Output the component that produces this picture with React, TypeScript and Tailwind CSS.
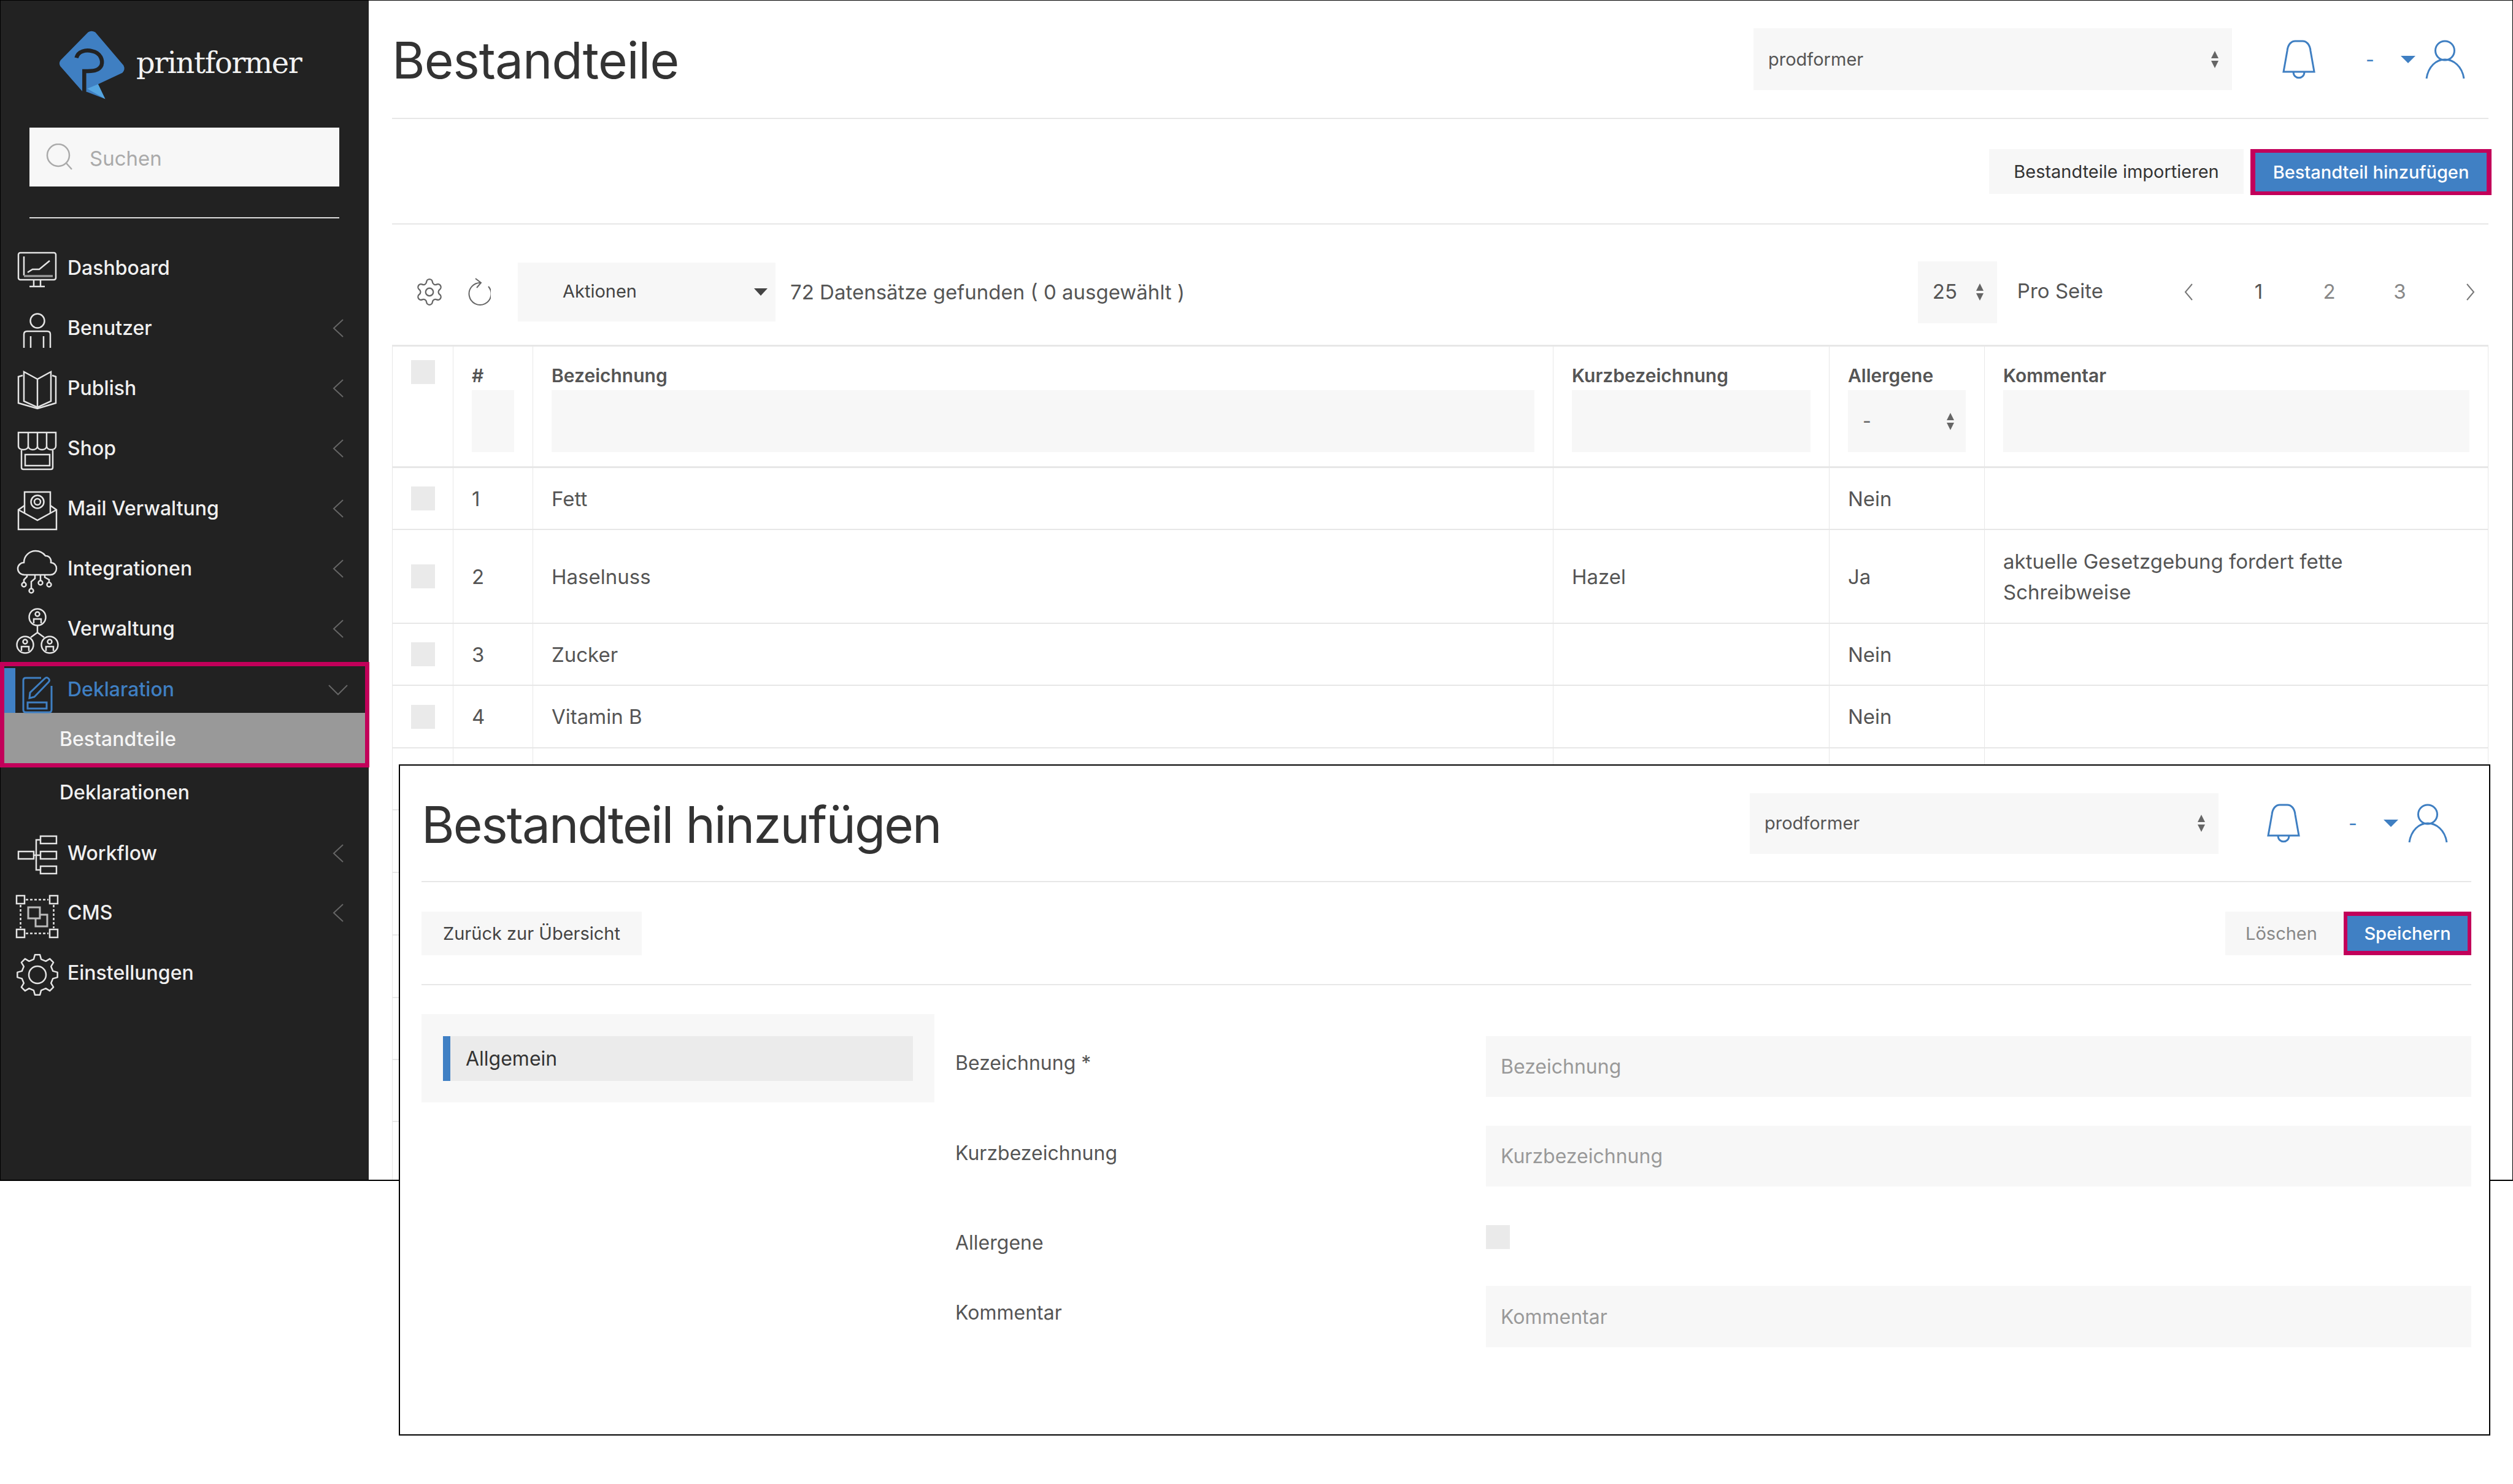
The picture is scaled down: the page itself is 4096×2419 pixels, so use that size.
import { ReactNode } from "react";
import { Settings } from "lucide-react";

const BORDER = "border-[#e7e7e7]";

function gearPath(cx: number, cy: number, outer: number, inner: number, teeth: number) {
  const points: string[] = [];
  const step = (Math.PI * 2) / teeth;
  for (let i = 0; i < teeth; i++) {
    const a = i * step - Math.PI / 2;
    const list: [number, number][] = [
      [inner, a - step * 0.3],
      [outer, a - step * 0.16],
      [outer, a + step * 0.16],
      [inner, a + step * 0.3],
    ];
    list.forEach(([r, t]) => {
      points.push(`${(cx + r * Math.cos(t)).toFixed(1)} ${(cy + r * Math.sin(t)).toFixed(1)}`);
    });
  }
  return `M${points.join(" L")} Z`;
}

function NavIcon({ children, blue }: { children: ReactNode; blue?: boolean }) {
  return (
    <svg
      viewBox="0 0 68 68"
      fill="none"
      stroke={blue ? "#3f7fc2" : "#e4e4e4"}
      strokeWidth={blue ? 3 : 2.5}
      className="h-[68px] w-[68px] shrink-0 overflow-visible"
    >
      {children}
    </svg>
  );
}

const icons: Record<string, ReactNode> = {
  Dashboard: (
    <>
      <rect x="4" y="9" width="61" height="44" rx="3" />
      <path d="M13 15V46" />
      <path d="M13 47H60" strokeWidth="3.5" stroke="#999" />
      <path d="M19 41L27 36H38L55 22" />
      <path d="M29 53V63M40 53V63M22 64H47" />
    </>
  ),
  Benutzer: (
    <>
      <circle cx="35" cy="22" r="11.5" />
      <path d="M13 66V44Q13 39 18 39H51Q56 39 56 44V66" />
      <path d="M24 47V66M45 47V66" />
    </>
  ),
  Publish: (
    <>
      <path d="M35 19V65M35 19L13 7V55L35 65L57 55V7L35 19Z" />
      <path d="M11 13L4 15V58L35 67L65 58V15L59 13" />
    </>
  ),
  Shop: (
    <>
      <path d="M4 8H65V30C65 38 50 38 50 30C50 38 35 38 35 30C35 38 20 38 20 30C20 38 4 38 4 30Z" />
      <path d="M20 8V30M35 8V30M50 8V30" />
      <path d="M9 37V65Q9 68 12 68H57Q60 68 60 65V37" />
      <rect x="15" y="44" width="40" height="18" />
    </>
  ),
  "Mail Verwaltung": (
    <>
      <path d="M14 29L4 36V68H66V36L56 29" />
      <path d="M14 42V7H56V42" />
      <path d="M4 36L35 53L66 36" />
      <circle cx="35" cy="23" r="10.5" />
      <circle cx="35" cy="23" r="5" />
    </>
  ),
  Integrationen: (
    <>
      <path d="M14 44C7 44 3 39 3 34C3 28 8 24 13 24C13 13 22 5 32 5C40 5 45 9 48 13C55 13 58 19 57 24C63 25 66 29 66 34C66 39 62 44 56 44Z" />
      <path d="M13 57V52L18 47V44M25 66V55L31 50V44M40 53V44M54 57V52L47 48V44" />
      <circle cx="13" cy="60" r="3.5" />
      <circle cx="25" cy="70" r="3.5" />
      <circle cx="40" cy="57" r="3.5" />
      <circle cx="54" cy="60" r="3.5" />
    </>
  ),
  Verwaltung: (
    <>
      <circle cx="35" cy="15" r="13.5" />
      <circle cx="15" cy="60" r="13.5" />
      <circle cx="55" cy="60" r="13.5" />
      <circle cx="35" cy="10" r="3.5" />
      <circle cx="15" cy="55" r="3.5" />
      <circle cx="55" cy="55" r="3.5" />
      <path d="M29 25V18H41V25M9 70V63H21V70M49 70V63H61V70" />
      <path d="M35 29V40M24 48L35 40L46 48" />
    </>
  ),
  Deklaration: (
    <>
      <path d="M41 14H16Q12 14 12 18V66Q12 70 16 70H54Q58 70 58 66V27" />
      <path d="M22 47L23 38L47 15Q50 12 53 15Q56 18 53 21L30 45Z" />
      <rect x="19" y="54" width="31" height="10" />
    </>
  ),
  Workflow: (
    <>
      <rect x="4" y="31" width="25" height="12" />
      <rect x="40" y="6" width="26" height="12" />
      <rect x="40" y="31" width="26" height="12" />
      <rect x="40" y="55" width="26" height="12" />
      <path d="M29 37H40M40 12H33V61H40" />
    </>
  ),
  CMS: (
    <>
      <rect x="1" y="6" width="13" height="13" />
      <rect x="55" y="6" width="13" height="13" />
      <rect x="1" y="61" width="13" height="13" />
      <rect x="55" y="61" width="13" height="13" />
      <path d="M16 12.5H53M16 67.5H53M7.5 21V59M61.5 21V59" strokeDasharray="4 3" />
      <rect x="20" y="25" width="19" height="18" stroke="#bbb" strokeWidth="3" />
      <path d="M39 37H51V56H32V43" stroke="#bbb" strokeWidth="3" />
    </>
  ),
  Einstellungen: (
    <>
      <path d={gearPath(35, 37, 33, 26, 8)} strokeLinejoin="round" />
      <circle cx="35" cy="37" r="14" />
    </>
  ),
};

function ChevronLeft() {
  return (
    <svg viewBox="0 0 18 30" fill="none" stroke="#666" strokeWidth="2" className="ml-auto mr-[41px] h-[30px] w-[18px]">
      <path d="M17 1L2 15L17 29" />
    </svg>
  );
}

function NavRow({ label, arrow = true, className }: { label: string; arrow?: boolean; className: string }) {
  return (
    <div className={`flex items-center pl-[25px] ${className}`}>
      <NavIcon>{icons[label]}</NavIcon>
      <span className="ml-[16px] text-[32px] font-medium text-[#f0f0f0]">{label}</span>
      {arrow && <ChevronLeft />}
    </div>
  );
}

function UpDown() {
  return (
    <svg viewBox="0 0 14 28" className="h-[28px] w-[14px] shrink-0" fill="#666">
      <path d="M7 0L13 12H1Z" />
      <path d="M1 16H13L7 28Z" />
    </svg>
  );
}

function Bell() {
  return (
    <svg viewBox="0 0 54 64" fill="none" stroke="#3f7fc2" strokeWidth="3" className="h-[64px] w-[54px] shrink-0">
      <path d="M2 52H52L46 18C45 7 39 2 33 2H21C15 2 9 7 8 18Z" />
      <path d="M18 52C18 65 36 65 36 52" />
    </svg>
  );
}

function User() {
  return (
    <svg viewBox="0 0 65 64" fill="none" stroke="#3f7fc2" strokeWidth="3" className="h-[64px] w-[65px] shrink-0">
      <circle cx="32" cy="17.5" r="15.5" />
      <path d="M2 63C5 43 18 32 32 32C46 32 60 43 63 63" />
    </svg>
  );
}

function Header({
  title,
  height,
  select,
  gap,
  tracking,
}: {
  title: string;
  height: string;
  select: string;
  gap: string;
  tracking: string;
}) {
  return (
    <div className={`flex items-center border-b-2 ${BORDER} ${height}`}>
      <h1 className={`pt-[5px] text-[82px] leading-none font-normal text-[#333] ${tracking}`}>{title}</h1>
      <div className="ml-auto flex items-center pr-[38px]">
        <div className={`flex items-center justify-between bg-[#f7f7f7] pl-[24px] pr-[21px] text-[29px] text-[#555] ${select}`}>
          <span>prodformer</span>
          <UpDown />
        </div>
        <div className={gap}>
          <Bell />
        </div>
        <span className={`w-[12px] text-[30px] leading-none text-[#3f7fc2] ${gap}`}>-</span>
        <svg viewBox="0 0 24 12" className="ml-[45px] h-[12px] w-[24px] shrink-0" fill="#3f7fc2">
          <path d="M0 0H24L12 12Z" />
        </svg>
        <div className="ml-[16px]">
          <User />
        </div>
      </div>
    </div>
  );
}

function Check() {
  return <div className="h-[39px] w-[39px] bg-[#eaeaea]" />;
}

function HeadText({ children }: { children: ReactNode }) {
  return <div className="h-[71px] pt-[27px] text-[30px] leading-[40px] font-semibold text-[#555]">{children}</div>;
}

function Filter({ children }: { children?: ReactNode }) {
  return (
    <div className="flex h-[101px] items-center justify-between bg-[#f7f7f7] pl-[24px] pr-[18px] text-[30px] text-[#666]">{children}</div>
  );
}

const rows = [
  { id: "1", name: "Fett", short: "", allergen: "Nein", note: "", h: "h-[101px]" },
  { id: "2", name: "Haselnuss", short: "Hazel", allergen: "Ja", note: "aktuelle Gesetzgebung fordert fette Schreibweise", h: "h-[153px]" },
  { id: "3", name: "Zucker", short: "", allergen: "Nein", note: "", h: "h-[101px]" },
  { id: "4", name: "Vitamin B", short: "", allergen: "Nein", note: "", h: "h-[102px]" },
  { id: "", name: "", short: "", allergen: "", note: "", h: "h-[101px]" },
  { id: "", name: "", short: "", allergen: "", note: "", h: "h-[102px]" },
  { id: "", name: "", short: "", allergen: "", note: "", h: "h-[102px]" },
  { id: "", name: "", short: "", allergen: "", note: "", h: "h-[102px]" },
  { id: "", name: "", short: "", allergen: "", note: "", h: "h-[101px]" },
  { id: "", name: "", short: "", allergen: "", note: "", h: "h-[101px]" },
  { id: "", name: "", short: "", allergen: "", note: "", h: "h-[102px]" },
];

const th = `border-r border-b-[3px] ${BORDER} px-[30px] align-top font-normal text-left`;
const td = `border-r border-b-2 ${BORDER} px-[30px] align-middle text-[33px] leading-[50px] text-[#555]`;

function Table() {
  return (
    <table className={`w-[3416px] table-fixed border-separate border-spacing-0 border-t-[3px] border-l ${BORDER}`}>
      <colgroup>
        <col className="w-[99px]" />
        <col className="w-[130px]" />
        <col className="w-[1663px]" />
        <col className="w-[450px]" />
        <col className="w-[253px]" />
        <col className="w-[821px]" />
      </colgroup>
      <thead>
        <tr className="h-[198px]">
          <th className={th}>
            <div className="pt-[22px]">
              <Check />
            </div>
          </th>
          <th className={th}>
            <HeadText>#</HeadText>
            <Filter />
          </th>
          <th className={th}>
            <HeadText>Bezeichnung</HeadText>
            <Filter />
          </th>
          <th className={th}>
            <HeadText>Kurzbezeichnung</HeadText>
            <Filter />
          </th>
          <th className={th}>
            <HeadText>Allergene</HeadText>
            <Filter>
              <span>-</span>
              <UpDown />
            </Filter>
          </th>
          <th className={th}>
            <HeadText>Kommentar</HeadText>
            <Filter />
          </th>
        </tr>
      </thead>
      <tbody>
        {rows.map((row, i) => (
          <tr key={i} className={row.h}>
            <td className={td}>{row.id && <Check />}</td>
            <td className={td}>{row.id}</td>
            <td className={td}>{row.name}</td>
            <td className={td}>{row.short}</td>
            <td className={td}>{row.allergen}</td>
            <td className={td}>{row.note}</td>
          </tr>
        ))}
      </tbody>
    </table>
  );
}

function Sidebar() {
  return (
    <aside className="h-full w-[600px] shrink-0 bg-[#222222]">
      <div className="ml-[65px] mt-[32px] flex h-[147px] items-center">
        <svg viewBox="0 0 540 540" className="h-[147px] w-[147px] shrink-0">
          <path
            d="M285 72Q305 58 328 72L497 270Q510 295 490 315L345 383L385 470L280 430L250 425L118 275Q108 258 120 240Z"
            fill="#3f7fc2"
          />
          <path d="M280 410L345 383L388 472Z" fill="#55a5e0" />
          <path d="M215 225C225 185 270 175 310 185C360 195 375 240 365 270C350 305 310 305 262 305V430" fill="none" stroke="#222222" strokeWidth="24" />
        </svg>
        <span className="-mt-[10px] ml-[9px] text-[48px] leading-none tracking-[-1.5px] text-[#f2f2f2] [font-family:'DejaVu_Serif',serif]">printformer</span>
      </div>
      <div className="ml-[47px] mt-[28px] flex h-[96px] w-[505px] items-center bg-[#f7f7f7] pl-[27px]">
        <svg viewBox="0 0 44 44" fill="none" stroke="#aaa" strokeWidth="2.5" className="h-[44px] w-[44px] shrink-0">
          <circle cx="20" cy="19" r="18" />
          <path d="M33 32L42 42" />
        </svg>
        <span className="ml-[27px] pt-[5px] text-[33px] text-[#aaa]">Suchen</span>
      </div>
      <div className="ml-[47px] mt-[50px] h-[2px] w-[505px] bg-[#dddddd]" />
      <nav className="mt-[32px]">
        <NavRow label="Dashboard" arrow={false} className="h-[98px]" />
        {["Benutzer", "Publish", "Shop", "Mail Verwaltung", "Integrationen", "Verwaltung"].map((label) => (
          <NavRow key={label} label={label} className="h-[98px]" />
        ))}
        <div className="relative z-10 -ml-[1px] mt-[5px] w-[602px] border-[7px] border-[#c2005a] bg-[#222222]">
          <div className="flex h-[76px] items-end">
            <div className="h-[73px] w-[18px] shrink-0 bg-[#4080c4]" />
            <div className="-mb-[1px] ml-[1px] flex h-[76px] flex-1 items-center">
              <NavIcon blue>{icons.Deklaration}</NavIcon>
              <span className="-mt-[3px] ml-[16px] text-[32px] font-medium text-[#3f7fc2]">Deklaration</span>
              <svg viewBox="0 0 32 18" fill="none" stroke="#666" strokeWidth="2" className="ml-auto mr-[28px] h-[18px] w-[32px]">
                <path d="M1 1L16 16L31 1" />
              </svg>
            </div>
          </div>
          <div className="flex h-[82px] items-center bg-[#999999] pl-[90px] pt-[3px] text-[32px] font-medium text-[#f5f5f5]">Bestandteile</div>
        </div>
        <div className="flex h-[78px] items-center pl-[96px] pt-[3px] text-[32px] font-medium text-[#f0f0f0]">Deklarationen</div>
        <NavRow label="Workflow" className="mt-[13px] h-[97px]" />
        <NavRow label="CMS" className="h-[98px]" />
        <NavRow label="Einstellungen" arrow={false} className="h-[98px]" />
      </nav>
    </aside>
  );
}

function AddPanel() {
  return (
    <div className="absolute left-[650px] top-[1246px] z-20 h-[1094px] w-[3409px] border-2 border-black bg-white pl-[35px] pr-[29px]">
      <Header
        title="Bestandteil hinzufügen"
        height="h-[190px]"
        select="h-[99px] w-[764px]"
        gap="ml-[79px]"
        tracking="tracking-[-2px]"
      />
      <div className={`flex h-[168px] items-start justify-between border-b-2 ${BORDER} pt-[48px]`}>
        <button type="button" className="h-[71px] w-[359px] bg-[#f7f7f7] text-[29px] text-[#444]">
          Zurück zur Übersicht
        </button>
        <div className="flex">
          <button type="button" className="h-[71px] w-[193px] bg-[#f7f7f7] pr-[10px] text-[29px] text-[#888]">
            Löschen
          </button>
          <button
            type="button"
            className="h-[71px] w-[208px] border-x-[6px] border-y-[7px] border-[#c2005a] bg-[#4080c4] text-[29px] font-medium text-white"
          >
            Speichern
          </button>
        </div>
      </div>
      <div className="flex items-start">
        <div className="mt-[47px] h-[144px] w-[836px] shrink-0 bg-[#f7f7f7] px-[35px] pt-[36px]">
          <div className="flex h-[73px] items-center border-l-[12px] border-[#4080c4] bg-[#ebebeb] pl-[25px] text-[32px] text-[#333]">Allgemein</div>
        </div>
        <div className="ml-[34px] mt-[83px] flex-1 text-[32px] leading-[40px] text-[#555]">
          <div className="flex h-[146px] items-start">
            <label className="w-[865px] shrink-0 pt-[24px]">Bezeichnung *</label>
            <input placeholder="Bezeichnung" className="h-[99px] flex-1 bg-[#f7f7f7] px-[24px] placeholder:text-[#999]" />
          </div>
          <div className="flex h-[146px] items-start">
            <label className="w-[865px] shrink-0 pt-[25px]">Kurzbezeichnung</label>
            <input placeholder="Kurzbezeichnung" className="h-[99px] flex-1 bg-[#f7f7f7] px-[24px] placeholder:text-[#999]" />
          </div>
          <div className="flex h-[115px] items-start">
            <label className="w-[865px] shrink-0 pt-[25px]">Allergene</label>
            <div className="pt-[16px]">
              <Check />
            </div>
          </div>
          <div className="flex items-start">
            <label className="w-[865px] shrink-0 pt-[24px]">Kommentar</label>
            <input placeholder="Kommentar" className="h-[100px] flex-1 bg-[#f7f7f7] px-[24px] placeholder:text-[#999]" />
          </div>
        </div>
      </div>
    </div>
  );
}

export default function App() {
  return (
    <div className="relative h-[2419px] w-[4096px] overflow-hidden bg-white [font-family:Inter,sans-serif]">
      <div className="flex h-[1925px] w-full border border-b-2 border-black">
        <Sidebar />
        <main className="min-w-0 flex-1 overflow-hidden pl-[38px] pr-[39px]">
          <Header title="Bestandteile" height="h-[193px]" select="h-[101px] w-[780px]" gap="ml-[82px]" tracking="tracking-[-1px]" />
          <div className={`flex h-[172px] items-start justify-end border-b-2 ${BORDER} pt-[49px]`}>
            <button type="button" className="h-[73px] w-[415px] bg-[#f7f7f7] text-[29px] text-[#333]">
              Bestandteile importieren
            </button>
            <button
              type="button"
              className="-mr-[5px] ml-[11px] h-[75px] w-[393px] border-x-[8px] border-y-[6px] border-[#c2005a] bg-[#4080c4] text-[29px] font-medium text-white"
            >
              Bestandteil hinzufügen
            </button>
          </div>
          <div className="flex h-[196px] items-center pt-[24px] text-[33px] text-[#555]">
            <Settings className="ml-[36px] h-[50px] w-[50px] shrink-0 text-[#666]" strokeWidth={1.1} />
            <svg viewBox="0 0 40 46" fill="none" stroke="#666" strokeWidth="2" className="ml-[35px] h-[46px] w-[40px] shrink-0">
              <path d="M24 8A18 18 0 1 0 36 14" />
              <path d="M15 1L24 8L17 16" />
            </svg>
            <div className="ml-[44px] flex h-[96px] w-[420px] items-center justify-between bg-[#f7f7f7] pl-[73px] pr-[13px]">
              <span className="-mt-[3px] text-[29px] text-[#444]">Aktionen</span>
              <svg viewBox="0 0 22 12" className="h-[12px] w-[22px]" fill="#444">
                <path d="M0 0H22L11 12Z" />
              </svg>
            </div>
            <span className="ml-[24px] pt-[2px]">72 Datensätze gefunden ( 0 ausgewählt )</span>
            <div className="ml-auto flex items-center">
              <div className="flex h-[101px] w-[129px] items-center justify-between bg-[#f7f7f7] pl-[24px] pr-[21px]">
                <span>25</span>
                <UpDown />
              </div>
              <span className="ml-[33px] -mt-[3px]">Pro Seite</span>
              <div className="-mr-[28px] ml-[81px] flex items-center text-center text-[#666]">
                <span className="flex w-[115px] justify-center">
                  <svg viewBox="0 0 14 28" fill="none" stroke="#777" strokeWidth="2" className="h-[28px] w-[14px]">
                    <path d="M13 1L2 14L13 27" />
                  </svg>
                </span>
                <span className="w-[115px] text-[#555]">1</span>
                <span className="w-[115px] text-[#888]">2</span>
                <span className="w-[115px] text-[#888]">3</span>
                <span className="flex w-[115px] justify-center">
                  <svg viewBox="0 0 14 28" fill="none" stroke="#777" strokeWidth="2" className="h-[28px] w-[14px]">
                    <path d="M1 1L12 14L1 27" />
                  </svg>
                </span>
              </div>
            </div>
          </div>
          <Table />
        </main>
      </div>
      <AddPanel />
    </div>
  );
}
